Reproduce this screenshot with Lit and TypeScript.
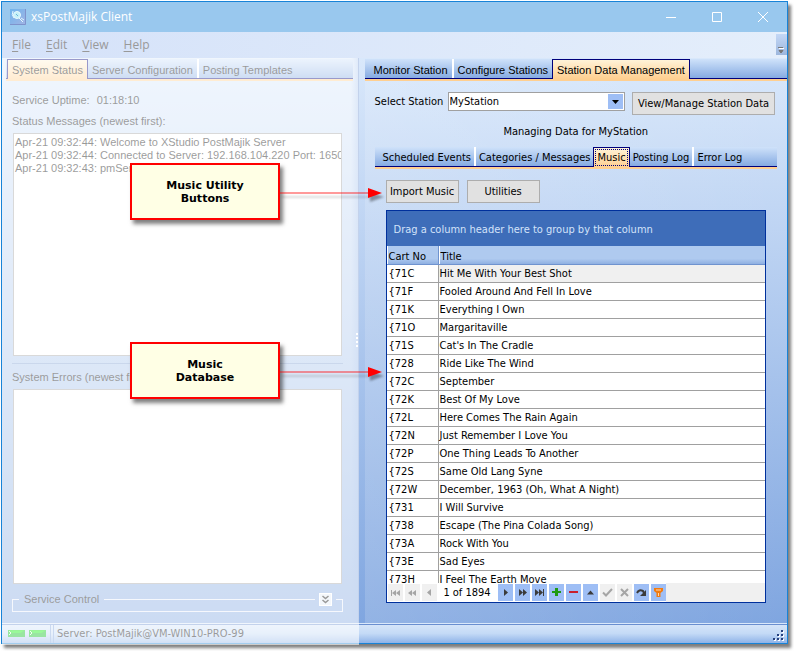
import { LitElement, html, svg, css } from "lit";
import { customElement, state } from "lit/decorators.js";
import { classMap } from "lit/directives/class-map.js";

const SONGS: [string, string][] = [
  ["{71C", "Hit Me With Your Best Shot"],
  ["{71F", "Fooled Around And Fell In Love"],
  ["{71K", "Everything I Own"],
  ["{71O", "Margaritaville"],
  ["{71S", "Cat's In The Cradle"],
  ["{728", "Ride Like The Wind"],
  ["{72C", "September"],
  ["{72K", "Best Of My Love"],
  ["{72L", "Here Comes The Rain Again"],
  ["{72N", "Just Remember I Love You"],
  ["{72P", "One Thing Leads To Another"],
  ["{72S", "Same Old Lang Syne"],
  ["{72W", "December, 1963 (Oh, What A Night)"],
  ["{731", "I Will Survive"],
  ["{738", "Escape (The Pina Colada Song)"],
  ["{73A", "Rock With You"],
  ["{73E", "Sad Eyes"],
  ["{73H", "I Feel The Earth Move"],
];

const LOG = [
  "Apr-21 09:32:44: Welcome to XStudio PostMajik Server",
  "Apr-21 09:32:44: Connected to Server: 192.168.104.220 Port: 16505",
  "Apr-21 09:32:43: pmServ",
].join("\n");

/* Navigator glyphs, each drawn on a 15 x 17 grid. */
const GLYPHS: Record<string, unknown> = {
  first: svg`<path d="M3 6h1v6H3zM8 6v6L4 9zM12 6v6L8 9z"/>`,
  prevPage: svg`<path d="M7 6v6L3 9zM11 6v6L7 9z"/>`,
  prev: svg`<path d="M9 5v7L5 8.5z"/>`,
  next: svg`<path d="M6 5v7l4-3.5z"/>`,
  nextPage: svg`<path d="M4 5v7l4-3.500zM8 5v7l4-3.500z"/>`,
  last: svg`<path d="M3 5v7l4-3.500zM7 5v7l4-3.500zM11 5h1v7h-1z"/>`,
  add: svg`<path fill="#1f9a12" d="M6 4h3v3h3v2H9v3H6V9H3V7h3z"/>`,
  remove: svg`<path fill="#c9202c" d="M3 7h9v2H3z"/>`,
  edit: svg`<path d="M4 10.500L7.500 6.500l3.500 4z"/>`,
  post: svg`<path fill="none" stroke="#a5a5a5" stroke-width="2" d="M3 8.500l3 3L12 5"/>`,
  cancel: svg`<path fill="none" stroke="#a5a5a5" stroke-width="2" d="M4 5l7 7M11 5l-7 7"/>`,
  refresh: svg`<path fill="none" stroke="#3b3b3b" stroke-width="2" d="M3 9Q5 5 9 7l1 2"/><path d="M12 6v6H6z"/>`,
  filter: svg`<path fill="#f27b10" d="M3 4h9v3L9.500 9v4h-4V9L3 7z"/><path fill="#ffd9ae" d="M5 5.500h5v1H5zM7 9h1v3H7z"/>`,
};

const NAV_LEFT = [["first", "First"], ["prevPage", "Previous page"], ["prev", "Previous"]];
const NAV_RIGHT = [
  ["next", "Next"], ["nextPage", "Next page"], ["last", "Last"], ["add", "Insert"], ["remove", "Delete"],
  ["edit", "Edit"], ["post", "Post"], ["cancel", "Cancel"], ["refresh", "Refresh"], ["filter", "Filter"],
];
const DISABLED = new Set(["first", "prevPage", "prev", "post", "cancel"]);

@customElement("tab-strip")
export class TabStrip extends LitElement {
  static properties = { tabs: { type: Array }, active: { type: Number }, focusRing: { type: Boolean } };
  declare tabs: string[];
  declare active: number;
  declare focusRing: boolean;
  constructor() {
    super();
    this.tabs = [];
    this.active = 0;
    this.focusRing = false;
  }
  static styles = css`
    :host { display: block; border-bottom: 2px solid #ffcf90; }
    .strip {
      display: flex; align-items: stretch; height: 20px; padding-left: var(--lead, 1px); box-sizing: border-box;
      background: linear-gradient(#cfe2fa, #86abe2); border-bottom: 1px solid #00007b;
    }
    button {
      display: flex; align-items: center; font: inherit; line-height: 14px; color: #000; background: none;
      border: 0; padding: 2px var(--tab-gap, 4px) 0; margin: 0; white-space: nowrap; position: relative;
    }
    button.sep { border-right: 2px solid #fff; border-image: linear-gradient(90deg, #6f93d0 50%, #fff 50%) 0 2; }
    button.on {
      border: 1px solid #00007b; border-bottom: 0; margin-bottom: -1px; padding-top: 1px;
      background: linear-gradient(#fff3d8, #ffcf90);
    }
    button.on.ring { padding: 0 1px; }
    .ring span { border: 1px dotted #00007b; padding: 1px 1px 0; }
  `;
  render() {
    return html`<div class="strip" role="tablist">
      ${this.tabs.map((t, i) => html`<button role="tab" aria-selected=${i === this.active}
        class=${classMap({
          on: i === this.active,
          ring: i === this.active && this.focusRing,
          sep: i !== this.active && i + 1 !== this.active && i < this.tabs.length - 1,
        })}
        @click=${() => (this.active = i)}><span>${t}</span></button>`)}
    </div>`;
  }
}

@customElement("call-out")
export class CallOut extends LitElement {
  static styles = css`
    :host { display: flex; align-items: flex-start; position: relative; }
    .box {
      width: 150px; height: 57px; box-sizing: border-box; display: flex; align-items: center; justify-content: center;
      text-align: center; border: 2px solid #f00; background: #ffffe5; color: #000;
      font: bold 11px/13px "DejaVu Sans", Verdana, sans-serif; box-shadow: 3px 4px 4px rgba(0, 0, 0, 0.5);
    }
    svg { display: block; margin-top: 22px; filter: drop-shadow(2px 4px 1px rgba(0, 0, 0, 0.35)); }
  `;
  render() {
    return html`<div class="box"><slot></slot></div>
      <svg width="104" height="16" viewBox="0 0 104 16" aria-hidden="true">
        <path d="M0 8h90" stroke="#f00" stroke-opacity="0.4" stroke-width="2"/>
        <path d="M88 3l14 5-14 5z" fill="#f00"/>
      </svg>`;
  }
}

@customElement("app-root")
export class AppRoot extends LitElement {
  @state() station = "MyStation";

  static styles = css`
    :host {
      --tahoma: "DejaVu Sans Condensed", Tahoma, sans-serif;
      --ms: "Liberation Sans", Arial, sans-serif;
      --segoe: "Open Sans", "Segoe UI", sans-serif;
      display: block; position: relative; height: 100vh; box-sizing: border-box; padding: 1px 6px 7px 1px;
      background: #fff; font: 11px/14px var(--tahoma); color: #000; overflow: hidden;
    }
    button, select, textarea { font: inherit; color: inherit; margin: 0; border-radius: 0; }
    .window {
      display: flex; flex-direction: column; height: 100%; box-sizing: border-box; position: relative;
      border: 1px solid #1883d7; box-shadow: 3px 4px 3px rgba(0, 0, 0, 0.5);
    }
    .title {
      display: flex; align-items: center; height: 30px; flex: none; padding: 0 1px 0 8px; background: #99c8ee;
      color: #fff; font: 12px/16px var(--segoe);
    }
    .title h1 { font: inherit; margin: 0 0 0 5px; flex: 1; }
    .title button { width: 46px; height: 30px; border: 0; padding: 0; background: none; display: grid; place-items: center; }
    .menu { display: flex; height: 26px; flex: none; background: linear-gradient(90deg, #d5e2f9, #e4eefb); color: #999; font: 12px/16px var(--segoe); }
    .menu nav { display: flex; flex: 1; align-items: center; padding-left: 2px; }
    .menu nav button { border: 0; background: none; padding: 0 7px 0 8px; }
    .menu u { text-underline-offset: 2px; }
    .menu .more { width: 11px; height: 21px; margin-top: 2px; padding: 0; border: 0; background: linear-gradient(#c3d7f6, #9db7dd); display: grid; place-items: end center; }
    .panes { flex: 1; min-height: 0; display: grid; grid-template-columns: minmax(0, 357fr) minmax(0, 429fr); background: linear-gradient(#d9e8fb, #80a6e0); }
    .left, .right { display: flex; flex-direction: column; min-height: 0; }
    .left { font-family: var(--ms); padding: 1px 5px 16px 4px; border-right: 1px solid #6a8fd0; background: linear-gradient(90deg, transparent 98%, rgba(120, 160, 225, 0.4)); position: relative; }
    .left::after { content: ""; position: absolute; right: 0; top: 50%; margin-top: -8px; height: 14px; border-right: 2px dotted #fff; }
    .left tab-strip { flex: none; }
    .left .body { flex: 1; display: flex; flex-direction: column; min-height: 0; padding: 12px 10px 0 6px; }
    .uptime { display: flex; gap: 7px; flex: none; }
    .left label { flex: none; }
    .log { padding-top: 7px; padding-bottom: 5px; }
    textarea {
      display: block; box-sizing: border-box; min-height: 0; resize: none; border: 1px solid #a0a0a0; background: #fff;
      padding: 2px 1px; margin: 0 1px; line-height: 13px; white-space: pre; overflow: hidden; outline: 0;
    }
    .messages { flex: 223 1 0; }
    .errors { flex: 195 1 0; }
    .rule { border: 0; border-top: 1px solid #7a9bd0; margin: 7px 0 6px; flex: none; }
    .err { padding-bottom: 5px; }
    .service { flex: none; display: flex; align-items: center; margin-top: 7px; height: 16px; position: relative; }
    .service::after { content: ""; height: 13px; width: 100%; box-sizing: border-box; border: 1px solid #e8eefa; border-top: 0; position: absolute; top: 8px; left: 0; pointer-events: none; }
    .service i { height: 1px; background: #e8eefa; flex: 1; }
    .service i.short { flex: 0 0 7px; }
    .service span { padding: 0 5px; }
    .service button { width: 13px; height: 13px; padding: 0; border: 1px solid #fff; background: #e4ebf5; display: grid; place-items: center; margin: 0 4px; }
    .right { padding: 1px 0 0 6px; }
    .right tab-strip { flex: none; --lead: 5px; --tab-gap: 3px; }
    .right > tab-strip { font-family: var(--ms); --tab-gap: 4px; }
    .right .body { flex: 1; min-height: 0; display: flex; flex-direction: column; padding: 11px 10px 20px; background: linear-gradient(90deg, rgba(255, 255, 255, 0.15), rgba(255, 255, 255, 0)); }
    .station { display: flex; align-items: flex-start; flex: none; gap: 7px; padding-right: 2px; }
    .pick { flex: 1; display: grid; }
    .pick > * { grid-area: 1 / 1; }
    .pick select { appearance: none; width: 100%; height: 19px; border: 1px solid #a0a0a0; background: #fff; padding: 0 18px 0 1px; outline: 0; }
    .pick svg { justify-self: end; margin: 2px; background: #9ebef5; pointer-events: none; }
    .push { height: 23px; border: 1px solid #adadad; background: #e1e1e1; padding: 0 2px; width: 73px; white-space: nowrap; }
    .station .push { width: 143px; }
    .station label { width: 66px; line-height: 19px; white-space: nowrap; }
    .managing { text-align: center; margin: 10px 0 8px; flex: none; }
    .music { flex: 1; min-height: 0; display: flex; flex-direction: column; padding: 11px 11px 0; }
    .tools { display: flex; gap: 8px; flex: none; margin-bottom: 7px; }
    .grid { flex: 1; min-height: 0; display: flex; flex-direction: column; border: 1px solid #00309c; background: #fff; }
    .group { flex: none; height: 35px; line-height: 37px; background: #3e6db9; color: #d3e3fa; padding-left: 7px; white-space: nowrap; overflow: hidden; }
    .rows { flex: 1; min-height: 0; overflow: hidden; }
    table { width: 100%; border-collapse: separate; border-spacing: 0; table-layout: fixed; }
    th, td { box-sizing: border-box; height: 18px; padding: 1px 2px 0; text-align: left; font-weight: 400; border-bottom: 1px solid #a0a0a0; white-space: nowrap; line-height: 14px; }
    th { height: 19px; padding-top: 3px; background: linear-gradient(#afcaef 70%, #8fb0e2); border-bottom-color: #6f93cf; box-shadow: inset 1px 0 #fff; }
    th:first-child { width: 52px; border-right: 1px solid #6f93cf; }
    td:first-child { border-right: 1px solid #a0a0a0; }
    td + td { padding-left: 1px; }
    tbody tr:first-child td + td { background: #f0f0f0; }
    .nav { flex: none; height: 19px; display: flex; align-items: center; gap: 2px; padding-left: 1px; background: linear-gradient(90deg, #fff 279px, #f0f0f0 279px); }
    .nav button { width: 15px; height: 17px; border: 0; padding: 0; background: #9ebef5; flex: none; }
    .nav button:disabled { background: #f0f0f0; }
    .nav svg { display: block; fill: #3b3b3b; }
    .nav button:disabled svg { fill: #a5a5a5; }
    .nav output { width: 57px; text-align: center; flex: none; white-space: nowrap; }
    .status { flex: none; display: flex; align-items: center; height: 20px; box-sizing: border-box; border-top: 1px solid #d9e8fb; box-shadow: inset 0 1px #6a8fd0; background: linear-gradient(#d7e6f9, #c4daf6 50%, #8fb3e8); }
    .leds { display: flex; gap: 4px; padding: 0 4px 0 6px; height: 18px; align-items: center; border-right: 1px solid #7ba0da; margin-right: 2px; }
    .server { flex: 1; padding-left: 3px; border-left: 1px solid #7ba0da; height: 18px; line-height: 18px; }
    .status .grip { align-self: flex-end; margin: 0 2px 2px 0; }
    .veil { position: absolute; left: 0; top: 56px; bottom: -2px; width: calc(100% * 357 / 786); background: rgba(255, 255, 255, 0.6); pointer-events: none; }
    call-out { position: absolute; left: 130px; }
    .c1 { top: 163px; }
    .c2 { top: 342px; }
  `;

  navButton([id, label]: string[]) {
    return html`<button aria-label=${label} ?disabled=${DISABLED.has(id)}><svg width="15" height="17" viewBox="0 0 15 17">${GLYPHS[id]}</svg></button>`;
  }

  led() {
    return html`<svg width="17" height="7" viewBox="0 0 17 7"><path fill="#00e000" d="M0 0h17v7H0z"/><path fill="#009a30" d="M0 7V0l4 3h9l4-3v7z" opacity=".5"/><path fill="#00f000" d="M2 1h13l-3 2H4z"/><path stroke="#dfffdf" d="M1 1l2 2-2 2" fill="none"/></svg>`;
  }

  render() {
    return html`
      <div class="window">
        <header class="title">
          <svg width="16" height="16" viewBox="0 0 16 16" aria-hidden="true">
            <defs><linearGradient id="ic" x2="1" y2="1"><stop stop-color="#6fb4ec"/><stop offset="1" stop-color="#a3b4e4"/></linearGradient></defs>
            <path fill="url(#ic)" d="M0 0h16v16H0z"/><path d="M0 15.500h15.500V0" fill="none" stroke="#7f93cb"/>
            <circle cx="7" cy="6" r="3.500" fill="#c4f0f8" stroke="#e9fbff"/><path d="M3 2q-2 4 1 7M9 9l4 4M11 9l3 2" stroke="#e4f7ff" fill="none"/><path d="M6 5l2 2" stroke="#6cb6dc"/>
          </svg>
          <h1>xsPostMajik Client</h1>
          <button aria-label="Minimize"><svg width="10" height="10"><path d="M0 5.500h10" stroke="#fff"/></svg></button>
          <button aria-label="Maximize"><svg width="10" height="10"><path d="M.5.5h9v9h-9z" fill="none" stroke="#fff"/></svg></button>
          <button aria-label="Close"><svg width="10" height="10"><path d="M0 0l10 10M10 0L0 10" stroke="#fff"/></svg></button>
        </header>
        <div class="menu">
          <nav>${["File", "Edit", "View", "Help"].map((m) => html`<button><u>${m[0]}</u>${m.slice(1)}</button>`)}</nav>
          <button class="more" aria-label="More"><svg width="7" height="8" viewBox="0 0 7 8"><path d="M1 1.500h5" stroke="#fff"/><path d="M0 .5h5M1 3.500h4L3 6z" stroke="#777" fill="#777"/></svg></button>
        </div>
        <div class="panes">
          <section class="left">
            <tab-strip .tabs=${["System Status", "Server Configuration", "Posting Templates"]} .active=${0}></tab-strip>
            <div class="body">
              <div class="uptime"><span>Service Uptime:</span><span>01:18:10</span></div>
              <label class="log" for="messages">Status Messages (newest first):</label>
              <textarea id="messages" class="messages" readonly .value=${LOG}></textarea>
              <hr class="rule" />
              <label class="err" for="errors">System Errors (newest first):</label>
              <textarea id="errors" class="errors" readonly></textarea>
              <div class="service"><i class="short"></i><span>Service Control</span><i></i>
                <button aria-label="Expand"><svg width="9" height="9"><path d="M1.500 1l3 2.500 3-2.500M1.500 5l3 2.500 3-2.500" fill="none" stroke="#000" stroke-width="1.500"/></svg></button>
                <i class="short"></i></div>
            </div>
          </section>
          <section class="right">
            <tab-strip .tabs=${["Monitor Station", "Configure Stations", "Station Data Management"]} .active=${2}></tab-strip>
            <div class="body">
              <div class="station">
                <label for="station">Select Station</label>
                <div class="pick">
                  <select id="station" .value=${this.station}><option>MyStation</option></select>
                  <svg width="15" height="15"><path d="M4 6h7l-3.500 4z" fill="#000"/></svg>
                </div>
                <button class="push">View/Manage Station Data</button>
              </div>
              <div class="managing">Managing Data for ${this.station}</div>
              <tab-strip .tabs=${["Scheduled Events", "Categories / Messages", "Music", "Posting Log", "Error Log"]} .active=${2} .focusRing=${true}></tab-strip>
              <div class="music">
                <div class="tools"><button class="push">Import Music</button><button class="push">Utilities</button></div>
                <div class="grid">
                  <div class="group">Drag a column header here to group by that column</div>
                  <div class="rows">
                    <table>
                      <thead><tr><th>Cart No</th><th>Title</th></tr></thead>
                      <tbody>${SONGS.map(([c, t]) => html`<tr><td>${c}</td><td>${t}</td></tr>`)}</tbody>
                    </table>
                  </div>
                  <div class="nav">${NAV_LEFT.map((b) => this.navButton(b))}<output>1 of 1894</output>${NAV_RIGHT.map((b) => this.navButton(b))}</div>
                </div>
              </div>
            </div>
          </section>
        </div>
        <footer class="status">
          <div class="leds">${this.led()}${this.led()}</div>
          <div class="server">Server: PostMajik@VM-WIN10-PRO-99</div>
          <svg class="grip" width="12" height="12"><path fill="#fff" d="M9 2h2v2H9zM5 6h2v2H5zM9 6h2v2H9zM1 10h2v2H1zM5 10h2v2H5zM9 10h2v2H9z"/><path fill="#27417e" d="M8 1h2v2H8zM4 5h2v2H4zM8 5h2v2H8zM0 9h2v2H0zM4 9h2v2H4zM8 9h2v2H8z"/></svg>
        </footer>
        <div class="veil"></div>
      </div>
      <call-out class="c1">Music Utility<br />Buttons</call-out>
      <call-out class="c2">Music<br />Database</call-out>
    `;
  }
}
